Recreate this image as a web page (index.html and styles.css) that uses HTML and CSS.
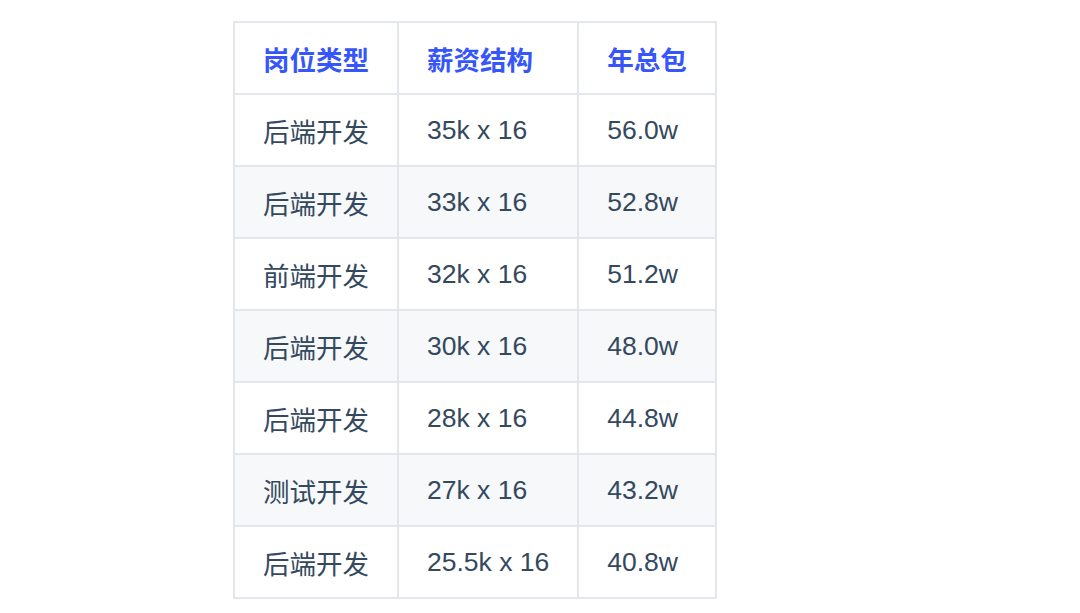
FILE: index.html
```html
<!DOCTYPE html>
<html lang="zh">
<head>
<meta charset="utf-8">
<link rel="stylesheet" href="styles.css">
</head>
<body>
<div class="page">
<table class="salary">
<thead>
<tr><th>岗位类型</th><th>薪资结构</th><th>年总包</th></tr>
</thead>
<tbody>
<tr><td>后端开发</td><td>35k x 16</td><td>56.0w</td></tr>
<tr><td>后端开发</td><td>33k x 16</td><td>52.8w</td></tr>
<tr><td>前端开发</td><td>32k x 16</td><td>51.2w</td></tr>
<tr><td>后端开发</td><td>30k x 16</td><td>48.0w</td></tr>
<tr><td>后端开发</td><td>28k x 16</td><td>44.8w</td></tr>
<tr><td>测试开发</td><td>27k x 16</td><td>43.2w</td></tr>
<tr><td>后端开发</td><td>25.5k x 16</td><td>40.8w</td></tr>
</tbody>
</table>
</div>
</body>
</html>
```

FILE: styles.css
```css
html, body {
  margin: 0;
  padding: 0;
  background: #ffffff;
}
.page {
  padding: 21px 0 0 233px;
}
.salary {
  border-collapse: collapse;
  font-family: "Liberation Sans", "Noto Sans CJK SC", sans-serif;
  font-size: 26.5px;
  color: #34495e;
}
.salary th,
.salary td {
  border: 2px solid #e3e6ea;
  padding: 0 28px;
  height: 72px;
  text-align: left;
  white-space: nowrap;
  box-sizing: border-box;
}
.salary th {
  color: #3656fb;
  font-weight: bold;
}
.salary td {
  font-weight: normal;
}
.salary tbody tr:nth-child(even) {
  background: #f6f8fa;
}
```
